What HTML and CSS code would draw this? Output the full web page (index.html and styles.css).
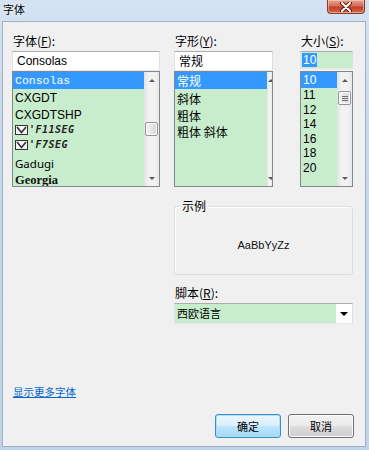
FILE: index.html
```html
<!DOCTYPE html>
<html lang="zh-CN">
<head>
  <meta charset="UTF-8" />
  <title>字体</title>
  <link rel="stylesheet" href="styles.css">
</head>
<body>

  <div class="titlebar">
    <div class="title">字体</div>
    <div class="close-btn">
      <svg width="14" height="10" viewBox="0 0 14 10">
        <path d="M3 1 L11 9 M11 1 L3 9" stroke="#5a1d14" stroke-width="4" stroke-linecap="round"/>
        <path d="M3 1 L11 9 M11 1 L3 9" stroke="#fff" stroke-width="2" stroke-linecap="round"/>
      </svg>
    </div>
  </div>

  <div class="client">
    <div class="pickers">

      <div class="col col-font">
        <div class="label">字体(<u>F</u>):</div>
        <div class="textbox">Consolas</div>
        <div class="listbox">
          <ul class="items">
            <li class="item selected f-consolas">Consolas</li>
            <li class="item f-cxgdt">CXGDT</li>
            <li class="item f-cxgdtshp">CXGDTSHP</li>
            <li class="item f-seg">
              <svg class="tt-icon" width="13" height="10" viewBox="0 0 13 10">
                <rect x="0.5" y="0.5" width="12" height="9" fill="#f4f4f4" stroke="#333"/>
                <path d="M2 2 L6.5 7.5 L11 2" fill="none" stroke="#333" stroke-width="1.6"/>
              </svg><span>'F11SEG</span>
            </li>
            <li class="item f-seg">
              <svg class="tt-icon" width="13" height="10" viewBox="0 0 13 10">
                <rect x="0.5" y="0.5" width="12" height="9" fill="#f4f4f4" stroke="#333"/>
                <path d="M2 2 L6.5 7.5 L11 2" fill="none" stroke="#333" stroke-width="1.6"/>
              </svg><span>'F7SEG</span>
            </li>
            <li class="item f-gadugi">Gadugi</li>
            <li class="item f-georgia">Georgia</li>
          </ul>
          <div class="scrollbar">
            <div class="arrow"><span class="tri-up"></span></div>
            <div class="track track-font"><div class="thumb"></div></div>
            <div class="arrow"><span class="tri-down"></span></div>
          </div>
        </div>
      </div>

      <div class="col col-style">
        <div class="label">字形(<u>Y</u>):</div>
        <div class="textbox cjk">常规</div>
        <div class="listbox">
          <ul class="items cjk">
            <li class="item selected s-first">常规</li>
            <li class="item s-second">斜体</li>
            <li class="item s-row">粗体</li>
            <li class="item s-row">粗体 斜体</li>
          </ul>
          <div class="scrollbar scrollbar-cut">
            <div class="arrow"><span class="tri-up"></span></div>
            <div class="track"></div>
            <div class="arrow"><span class="tri-down"></span></div>
          </div>
        </div>
      </div>

      <div class="col col-size">
        <div class="label">大小(<u>S</u>):</div>
        <div class="textbox textbox-size"><span class="sel-text">10</span></div>
        <div class="listbox">
          <ul class="items">
            <li class="item selected z-first">10</li>
            <li class="item z-row">11</li>
            <li class="item z-row">12</li>
            <li class="item z-row">14</li>
            <li class="item z-row">16</li>
            <li class="item z-row">18</li>
            <li class="item z-row">20</li>
          </ul>
          <div class="scrollbar">
            <div class="arrow"><span class="tri-up"></span></div>
            <div class="track track-size">
              <div class="thumb thumb-grip"><i></i><i></i><i></i></div>
            </div>
            <div class="arrow"><span class="tri-down"></span></div>
          </div>
        </div>
      </div>

    </div>

    <div class="lower">
      <div class="group">
        <div class="group-title">示例</div>
        <div class="sample-text">AaBbYyZz</div>
      </div>

      <div class="label label-script">脚本(<u>R</u>):</div>
      <div class="combo">
        <div class="combo-field">西欧语言</div>
        <div class="combo-btn"><span class="tri-down tri-big"></span></div>
      </div>
    </div>

    <a class="more-link" href="#">显示更多字体</a>

    <div class="buttons">
      <button class="btn btn-default">确定</button>
      <button class="btn">取消</button>
    </div>
  </div>

</body>
</html>
```

FILE: styles.css
```css
* {
  box-sizing: border-box;
}

body {
  margin: 0;
  width: 369px;
  height: 450px;
  overflow: hidden;
  background: linear-gradient(180deg, #d4e3f2 0%, #c6d9ed 30%, #bdd3ea 100%);
  font-family: "Liberation Sans", "Noto Sans CJK SC", sans-serif;
  font-size: 12px;
  color: #000;
}

.cjk {
  font-family: "Noto Sans CJK SC", sans-serif;
}

/* title bar */
.titlebar {
  height: 21px;
  display: flex;
  justify-content: space-between;
  align-items: flex-start;
}

.title {
  padding: 2px 0 0 3px;
  font-family: "Noto Sans CJK SC", sans-serif;
  font-size: 11px;
  line-height: 14px;
  text-shadow: 0 0 5px #fff;
}

.close-btn {
  width: 38px;
  height: 14px;
  margin-right: 4px;
  border: 1px solid #8a3a2c;
  border-top: none;
  border-radius: 0 0 4px 4px;
  background: linear-gradient(180deg, #e8a595 0%, #d66b55 45%, #c13e26 55%, #d46a4a 100%);
  box-shadow: inset 0 0 0 1px rgba(255, 220, 210, 0.5);
  display: flex;
  align-items: center;
  justify-content: center;
}

/* client area */
.client {
  margin-left: 2px;
  width: 364px;
  height: 426px;
  background: #f0f0f0;
  border: 1px solid #9fb0c2;
  padding: 11px 11px 8px 9px;
  display: flex;
  flex-direction: column;
}

.pickers {
  display: flex;
}

.col-font {
  width: 148px;
}

.col-style {
  width: 99px;
  margin-left: 14px;
}

.col-size {
  width: 53px;
  margin-left: 27px;
}

.label {
  height: 16px;
  line-height: 16px;
  margin-bottom: 2px;
  padding-left: 1px;
  font-family: "Noto Sans CJK SC", sans-serif;
  font-size: 12px;
}

.textbox {
  height: 20px;
  padding: 0 4px;
  line-height: 18px;
  background: #fff;
  border: 1px solid #abadb3;
  border-color: #abadb3 #dbdfe6 #e3e9ef #e2e3ea;
  font-size: 12px;
}

.textbox-size {
  height: 18px;
  margin-bottom: 2px;
  padding: 1px 1px;
  line-height: 14px;
  background: #c7edcc;
}

.sel-text {
  display: inline-block;
  background: #3399ff;
  color: #fff;
  padding: 0 1px;
  line-height: 14px;
}

.listbox {
  height: 116px;
  display: flex;
  background: #c7edcc;
  border: 1px solid #828790;
}

.items {
  flex: 1;
  margin: 0;
  padding: 0;
  list-style: none;
  overflow: hidden;
}

.item {
  display: flex;
  align-items: center;
  padding-left: 2px;
  white-space: nowrap;
}

.item.selected {
  background: #3399ff;
  color: #fff;
}

/* font list rows */
.f-consolas {
  height: 17px;
  font-family: "Liberation Mono", monospace;
  font-size: 11.5px;
}

.f-cxgdt {
  height: 18px;
  font-size: 12px;
}

.f-cxgdtshp {
  height: 15px;
  font-size: 12px;
}

.f-seg {
  height: 15px;
  font-family: "DejaVu Sans Mono", monospace;
  font-weight: bold;
  font-style: italic;
  font-size: 10px;
  letter-spacing: 0.5px;
  color: #222;
}

.tt-icon {
  margin-right: 1px;
}

.f-gadugi {
  height: 21px;
  padding-top: 2px;
  font-family: "Noto Sans", sans-serif;
  font-size: 11.5px;
}

.f-georgia {
  height: 15px;
  font-family: "Liberation Serif", serif;
  font-weight: bold;
  font-size: 12.5px;
  color: #111;
}

/* style list rows */
.s-first {
  height: 17px;
  font-size: 12px;
}

.s-second {
  height: 18px;
  font-size: 12px;
}

.s-row {
  height: 16px;
  font-size: 12px;
}

/* size list rows */
.z-first {
  height: 16px;
  font-size: 12px;
}

.z-row {
  height: 14.5px;
  font-size: 12px;
}

/* scrollbars */
.scrollbar {
  width: 15px;
  display: flex;
  flex-direction: column;
  background: linear-gradient(90deg, #e3e3e3 0%, #f2f2f2 30%, #f2f2f2 70%, #e8e8e8 100%);
}

.scrollbar-cut {
  width: 5px;
  overflow: hidden;
}

.scrollbar-cut .arrow {
  justify-content: flex-start;
  padding-left: 1px;
}

.arrow {
  height: 16px;
  display: flex;
  align-items: center;
  justify-content: center;
}

.tri-up {
  width: 0;
  height: 0;
  border-left: 3px solid transparent;
  border-right: 3px solid transparent;
  border-bottom: 3px solid #5a5a5a;
}

.tri-down {
  width: 0;
  height: 0;
  border-left: 3px solid transparent;
  border-right: 3px solid transparent;
  border-top: 3px solid #5a5a5a;
}

.track {
  flex: 1;
  padding: 0 1px;
}

.track-font {
  padding-top: 34px;
}

.track-size {
  padding-top: 3px;
}

.thumb {
  height: 14px;
  border: 1px solid #959595;
  border-radius: 2px;
  background: linear-gradient(90deg, #f4f4f4 0%, #e6e6e6 50%, #d6d6d6 100%);
  box-shadow: inset 0 0 0 1px #fcfcfc;
}

.thumb-grip {
  display: flex;
  flex-direction: column;
  align-items: center;
  justify-content: center;
  gap: 1px;
}

.thumb-grip i {
  width: 6px;
  height: 1px;
  background: #6e6e6e;
}

/* lower right block */
.lower {
  margin-left: 162px;
  width: 179px;
}

.group {
  margin-top: 19px;
  height: 69px;
  border: 1px solid #d5dfe5;
  border-radius: 3px;
  box-shadow: inset 1px 1px 0 #fff;
  display: flex;
  flex-direction: column;
}

.group-title {
  width: fit-content;
  margin: -8px 0 0 5px;
  padding: 0 2px;
  background: #f0f0f0;
  font-family: "Noto Sans CJK SC", sans-serif;
  font-size: 12px;
  line-height: 14px;
}

.sample-text {
  flex: 1;
  display: flex;
  align-items: center;
  justify-content: center;
  padding-top: 3px;
  font-size: 11px;
  color: #111;
}

.label-script {
  margin-top: 10px;
}

.combo {
  height: 21px;
  display: flex;
  border: 1px solid #abadb3;
  border-color: #abadb3 #dbdfe6 #e3e9ef #e2e3ea;
  background: #fff;
}

.combo-field {
  flex: 1;
  background: #c7edcc;
  padding-left: 2px;
  line-height: 19px;
  font-family: "Noto Sans CJK SC", sans-serif;
  font-size: 11px;
}

.combo-btn {
  width: 16px;
  display: flex;
  align-items: center;
  justify-content: center;
}

.tri-big {
  border-left-width: 4px;
  border-right-width: 4px;
  border-top: 4px solid #000;
}

/* bottom */
.more-link {
  margin-top: auto;
  margin-left: 1px;
  width: fit-content;
  height: 16px;
  line-height: 16px;
  font-family: "Noto Sans CJK SC", sans-serif;
  font-size: 10.5px;
  color: #0066cc;
  text-decoration: underline;
}

.buttons {
  margin-top: 14px;
  display: flex;
  justify-content: flex-end;
  gap: 7px;
}

.btn {
  width: 66px;
  height: 24px;
  padding: 0;
  border: 1px solid #707070;
  border-radius: 3px;
  background: linear-gradient(180deg, #f2f2f2 0%, #ebebeb 49%, #dddddd 50%, #cfcfcf 100%);
  box-shadow: inset 0 0 0 1px #fcfcfc;
  font-family: "Noto Sans CJK SC", sans-serif;
  font-size: 11px;
  color: #000;
}

.btn-default {
  border-color: #3c8cc8;
  background: linear-gradient(180deg, #eaf6fd 0%, #d9f0fc 49%, #bee6fd 50%, #a7d9f5 100%);
  box-shadow: inset 0 0 0 1px #a8e2fb;
}
```
